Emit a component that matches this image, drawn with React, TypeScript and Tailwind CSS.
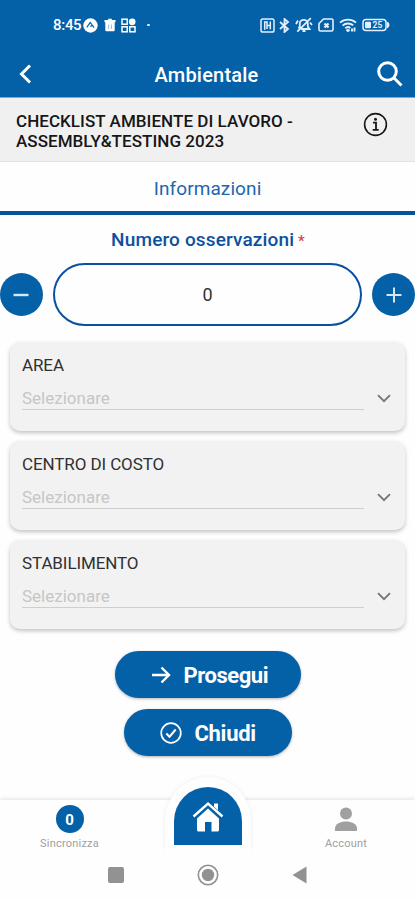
import React, { useState } from 'react';

const FIELDS = ['AREA', 'CENTRO DI COSTO', 'STABILIMENTO'];

const StatusBar = () => (
  <div className="flex h-[50px] items-center pl-[53px] pr-[25px] text-white">
    <span className="w-[30px] text-[15px] leading-none font-medium tracking-[-0.3px] whitespace-nowrap">8:45</span>
    <svg className="h-[15px] w-[15px]" viewBox="0 0 15 15">
      <circle cx="7.5" cy="7.5" r="7.2" fill="currentColor" />
      <path d="M3.8 9.4 7.2 4.6l1.3 1.6M7.6 8.8l1.3-2 2.2 2.8" fill="none" stroke="#0461a8" strokeWidth="1.2" />
    </svg>
    <svg className="ml-[6px] h-[14px] w-[12px]" viewBox="0 0 12 14">
      <path d="M4.2.8h3.6V2h3.7v2.2H.5V2h3.7zM1.3 4.2h9.4V12a1.2 1.2 0 0 1-1.2 1.2h-7A1.2 1.2 0 0 1 1.3 12z" fill="currentColor" />
      <path d="M4.6 6.5V11M7.4 6.5V11" stroke="#0461a8" strokeWidth=".7" opacity=".6" />
    </svg>
    <svg className="ml-[5px] h-[15px] w-[15px]" viewBox="0 0 15 15" fill="none" stroke="currentColor" strokeWidth="1.5">
      <rect x="1" y="1.2" width="5.2" height="5" />
      <rect x="1" y="8.8" width="5.2" height="5" />
      <rect x="8.8" y="8.8" width="5.2" height="5" />
      <circle cx="11.2" cy="3.8" r="2.6" fill="currentColor" />
    </svg>
    <span className="ml-[11px] h-[2px] w-[3px] rounded-full bg-white/90" />
    <div className="ml-auto flex items-center text-[#e4efff]">
      <svg className="h-[15px] w-[15px]" viewBox="0 0 15 15" fill="none" stroke="currentColor" strokeWidth="1.5">
        <rect x="1" y="1" width="13" height="13" rx="1.8" />
        <path d="M4.7 11.800V4H7v7M7.500 7.500H10M10.300 11.200V3.500" />
      </svg>
      <svg className="ml-[4px] h-[15px] w-[11px]" viewBox="0 0 11 15" fill="none" stroke="currentColor" strokeWidth="1.8">
        <path d="m1 4 8 7-3.500 3V1L9 4l-8 7" />
      </svg>
      <svg className="ml-[5px] h-[16px] w-[18px]" viewBox="0 0 18 16" fill="none" stroke="currentColor" strokeWidth="1.8">
        <path d="m3.500 11.500 1.300-1.900V6.800c0-2.200 1.800-4 4-4s4 1.800 4 4v2.800l1.700 2.400H6M7.500 14h3M15.800 1.200 2.300 14.700M1 7l2-3.500M15 5.500l2 2.500" />
      </svg>
      <svg className="ml-[5px] h-[14px] w-[16px]" viewBox="0 0 16 14" fill="none" stroke="currentColor" strokeWidth="1.6">
        <path d="M5.5 1h8C14.3 1 15 1.7 15 2.5v9c0 .8-.7 1.5-1.5 1.5h-11C1.7 13 1 12.3 1 11.5V5.5z" />
        <path d="m6.5 5.500 4 4M10.500 5.500l-4 4" strokeWidth="2.2" />
      </svg>
      <svg className="ml-[5px] h-[14px] w-[18px]" viewBox="0 0 18 14" fill="none" stroke="currentColor" strokeWidth="1.9">
        <path d="M1 4.600c4.600-4 11.400-4 16 0M3.600 7.600c3-2.700 7.500-2.700 10.600-.3M6.300 10.300c1.500-1.400 3.500-1.500 5-.4" />
        <path d="m7.500 11.500 1.500 1.600 1.500-1.600M13 10.500v3M15.500 9.500v4" />
      </svg>
      <svg className="ml-[5px] h-[14px] w-[28px]" viewBox="0 0 28 14" fill="none" stroke="currentColor" strokeWidth="1.5">
        <rect x="1" y="1.5" width="23" height="11" rx="3" />
        <path d="M25 4.500c2.300.5 2.300 4.500 0 5" fill="currentColor" />
        <rect x="3" y="3.700" width="6" height="6.600" rx="1" fill="currentColor" stroke="none" />
        <text x="10.5" y="10" fontSize="8.5" fontWeight="700" fill="currentColor" stroke="none">25</text>
      </svg>
    </div>
  </div>
);

const SelectCard = ({ label }: { label: string }) => (
  <div className="h-[89px] rounded-[10px] bg-[#f2f2f2] pt-[13px] pr-[13px] pl-[12px] shadow-[0_2px_4px_rgba(0,0,0,0.24)]">
    <div className="text-[17px] leading-[20px] tracking-[-0.1px] text-[#303030]">{label}</div>
    <div className="mt-[9px] flex items-start">
      <div className="h-[26px] w-[342px] border-b border-[#cecece] text-[17px] leading-[28px] text-[#c6c6c6]">
        Selezionare
      </div>
      <svg className="mt-[10px] ml-[13px] h-[9px] w-[14px]" viewBox="0 0 14 9" fill="none" stroke="#777" strokeWidth="1.9">
        <path d="m1 1.200 6 6 6-6" />
      </svg>
    </div>
  </div>
);

export default function App() {
  const [count, setCount] = useState(0);

  return (
    <div className="flex h-[900px] w-[415px] flex-col overflow-hidden bg-[#fefefe] font-[Roboto,sans-serif]">
      <header className="h-[98px] shrink-0 border-b border-[#7fa9cf] bg-[#0461a8]">
        <StatusBar />
        <div className="flex h-[47px] items-center justify-between pr-[12px] pl-[19px] text-white">
          <svg className="h-[20px] w-[13px]" viewBox="0 0 13 20" fill="none" stroke="currentColor" strokeWidth="3">
            <path d="m11 1.500-8.500 8.500 8.500 8.500" />
          </svg>
          <h1 className="mt-[3px] ml-[4px] text-[20px] leading-none font-medium tracking-[0.2px]">Ambientale</h1>
          <svg className="h-[26px] w-[26px]" viewBox="0 0 26 26" fill="none" stroke="currentColor" strokeWidth="3">
            <circle cx="10.5" cy="10.5" r="8.8" />
            <path d="m16.800 16.800 7.700 7.700" />
          </svg>
        </div>
      </header>

      <div className="flex h-[64px] shrink-0 justify-between border-b border-[#e2e2e2] bg-[#f0f0f0] pt-[13px] pr-[27px] pl-[16px]">
        <p className="text-[17px] leading-[20px] font-medium tracking-[0.05px] whitespace-nowrap text-[#161616]">
          CHECKLIST AMBIENTE DI LAVORO -<br />
          ASSEMBLY&amp;TESTING 2023
        </p>
        <svg className="mt-[1px] h-[25px] w-[25px]" viewBox="0 0 25 25" fill="none" stroke="#181818" strokeWidth="1.6">
          <circle cx="12.5" cy="12.5" r="10.9" />
          <path d="M10 10.700h3v7M9.700 17.900h6" strokeWidth="1.8" />
          <circle cx="12.5" cy="7.2" r="1.5" fill="#181818" stroke="none" />
        </svg>
      </div>

      <div className="flex h-[53px] shrink-0 items-center justify-center border-b-4 border-[#06529b] pt-[6px] text-[19px] tracking-[0.1px] text-[#1f66ad]">
        Informazioni
      </div>

      <div className="mt-[13px] pl-[1px] text-center text-[19px] leading-[24px] font-medium tracking-[0.15px] text-[#0c51a0]">
        Numero osservazioni <span className="-ml-[1px] text-[15px] text-[#d8405c]">*</span>
      </div>
      <div className="mt-[10px] flex h-[63px] shrink-0 items-center justify-between">
        <button
          onClick={() => setCount(Math.max(0, count - 1))}
          className="flex h-[43px] w-[43px] items-center justify-center rounded-full bg-[#0461a8]"
        >
          <svg className="mr-[1px] h-[16px] w-[16px]" viewBox="0 0 16 16" stroke="#d4e8fa" strokeWidth="2.4">
            <path d="M.5 8h15" />
          </svg>
        </button>
        <div className="flex h-[63px] w-[309px] items-center justify-center rounded-full border-2 border-[#0a50a0] text-[18px] text-[#333]">
          {count}
        </div>
        <button
          onClick={() => setCount(count + 1)}
          className="flex h-[43px] w-[43px] items-center justify-center rounded-full bg-[#0461a8]"
        >
          <svg className="h-[16px] w-[16px]" viewBox="0 0 16 16" stroke="#d4e8fa" strokeWidth="2">
            <path d="M.5 8h15M8 .5v15" />
          </svg>
        </button>
      </div>

      <div className="mt-[16px] flex flex-col gap-[10px] px-[10px]">
        {FIELDS.map((label) => (
          <SelectCard key={label} label={label} />
        ))}
      </div>

      <div className="mt-[22px] flex flex-col items-center gap-[11px] text-[22px] font-bold text-white">
        <button className="flex h-[47px] w-[186px] items-center rounded-full bg-[#0461a8] pl-[36px] shadow-[0_1px_3px_rgba(0,0,0,0.3)]">
          <svg className="h-[18px] w-[20px]" viewBox="0 0 20 18" fill="none" stroke="currentColor" strokeWidth="2.4">
            <path d="M1 9h17M10.500 1.500 18 9l-7.500 7.500" />
          </svg>
          <span className="ml-[13px] pt-[1px] tracking-[-0.45px]">Prosegui</span>
        </button>
        <button className="flex h-[47px] w-[168px] items-center rounded-full bg-[#0461a8] pl-[36px] shadow-[0_1px_3px_rgba(0,0,0,0.3)]">
          <svg className="h-[22px] w-[22px]" viewBox="0 0 22 22" fill="none" stroke="currentColor" strokeWidth="1.7">
            <circle cx="11" cy="11" r="9.8" />
            <path d="m6.300 11.500 3.200 3.200L15.700 7.500" strokeWidth="2" />
          </svg>
          <span className="ml-[13px] pt-[1px] tracking-[-0.3px]">Chiudi</span>
        </button>
      </div>

      <nav className="mt-auto flex h-[50px] shrink-0 justify-between shadow-[0_-2px_3px_rgba(0,0,0,0.08)]">
        <div className="flex w-[139px] flex-col items-center pt-[5px]">
          <span className="flex h-[28px] w-[28px] items-center justify-center rounded-full bg-[#0461a8] pt-[2px] text-[15px] font-bold text-white">
            0
          </span>
          <span className="mt-[5px] text-[11px] leading-[12px] tracking-[0.2px] text-[#a0a0a0]">Sincronizza</span>
        </div>
        <div className="-mt-[23px] h-[73px] w-[86px] shrink-0 rounded-t-[43px] bg-[#fefefe] px-[9px] pt-[10px] shadow-[0_0_4px_rgba(0,0,0,0.07)]">
          <div className="flex h-[58px] w-[68px] justify-center rounded-t-[34px] bg-[#0461a8] pt-[14px]">
            <svg className="h-[32px] w-[32px]" viewBox="0 0 32 32">
              <path d="M22 2.500h4v8l-4-3.700zM5 17.500 16 7.500l11 10V29a1.500 1.500 0 0 1-1.500 1.500h-6V21h-6.500v9.500H6.500A1.500 1.500 0 0 1 5 29z" fill="#fff" />
              <path d="M1.500 16.500 16 3.200l14.500 13.300" fill="none" stroke="#0461a8" strokeWidth="4.5" />
              <path d="M1.500 15.500 16 2.500l14.500 13" fill="none" stroke="#fff" strokeWidth="2.4" />
            </svg>
          </div>
        </div>
        <div className="flex w-[139px] flex-col items-center pt-[7px]">
          <svg className="h-[25px] w-[24px]" viewBox="0 0 24 25" fill="#a0a0a0">
            <circle cx="12" cy="6.5" r="6" />
            <path d="M1 24v-2.500C1 17 6.500 14.500 12 14.500s11 2.500 11 7V24z" />
          </svg>
          <span className="mt-[6px] pl-[1px] text-[11px] leading-[12px] tracking-[0.2px] text-[#a0a0a0]">Account</span>
        </div>
      </nav>

      <div className="flex h-[50px] shrink-0 items-center justify-between bg-[#fefefe] pr-[108px] pl-[108px]">
        <span className="h-[16px] w-[16px] rounded-[2px] bg-[#929292]" />
        <svg className="h-[22px] w-[22px]" viewBox="0 0 22 22">
          <circle cx="11" cy="11" r="9.7" fill="none" stroke="#929292" strokeWidth="1.6" />
          <circle cx="11" cy="11" r="6.2" fill="#929292" />
        </svg>
        <svg className="h-[18px] w-[15px]" viewBox="0 0 15 18" fill="#929292">
          <path d="M14.500.5v17L.5 9z" />
        </svg>
      </div>
    </div>
  );
}
